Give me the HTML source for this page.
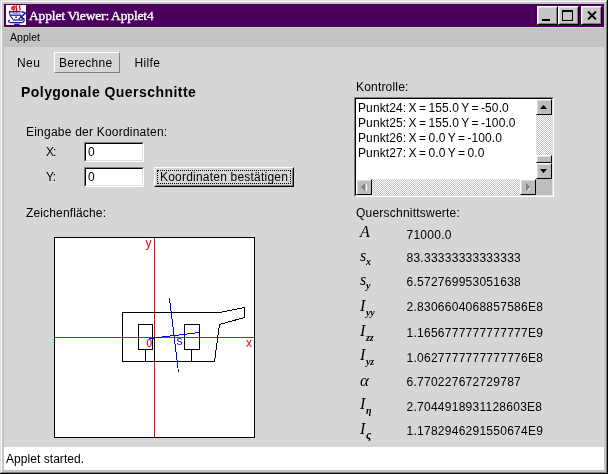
<!DOCTYPE html>
<html lang="de">
<head>
<meta charset="utf-8">
<title>Applet Viewer: Applet4</title>
<style>
html,body{margin:0;padding:0;}
body{width:608px;height:474px;overflow:hidden;background:#c4c4c4;position:relative;will-change:transform;
 font-family:"Liberation Sans",sans-serif;font-size:12px;color:#000;}
.abs{position:absolute;}
.t{position:absolute;white-space:nowrap;line-height:14px;height:14px;}
#frame{left:0;top:0;width:608px;height:474px;background:#c6c6c6;}
#titlebar{left:4px;top:4px;width:600px;height:23px;background:#4a005c;}
#title{left:29px;top:8px;font-family:"Liberation Serif",serif;font-size:13.5px;color:#fff;line-height:16px;height:16px;letter-spacing:-0.15px;word-spacing:-0.4px;-webkit-text-stroke:0.35px #fff;}
#menubar{left:4px;top:27px;width:600px;height:20px;}
#content{left:4px;top:47px;width:600px;height:400px;background:#d6d6d6;}
#status{left:4px;top:447px;width:600px;height:23px;background:#fff;}
.wbtn{position:absolute;top:6px;height:19px;width:21px;background:#c6c6c6;box-sizing:border-box;
 border:1px solid;border-color:#fff #000 #000 #fff;}
.wbtn:after{content:"";position:absolute;left:0;top:0;right:0;bottom:0;border:1px solid;border-color:#dfdfdf #808080 #808080 #dfdfdf;}
.field{position:absolute;box-sizing:border-box;background:#fff;border:1px solid;border-color:#808080 #fff #fff #808080;}
.field:after{content:"";position:absolute;left:0;top:0;right:0;bottom:0;border:1px solid;border-color:#000 #dfdfdf #dfdfdf #000;}
.sym{position:absolute;white-space:nowrap;font-family:"Liberation Serif",serif;font-style:italic;font-size:16px;line-height:18px;height:18px;}
.sym sub{font-size:10px;font-weight:bold;vertical-align:baseline;position:relative;top:5px;left:0.6px;line-height:0;}
.sym sub.s{top:3.5px;left:-0.3px;}
.v{left:406.5px;letter-spacing:0.26px;}
.sbtn{position:absolute;width:16px;height:16px;box-sizing:border-box;background:#bcbcbc;border:1px solid;border-color:#fff #000 #000 #fff;}
.sbtn:before{content:"";position:absolute;left:0;top:0;right:0;bottom:0;border:1px solid;border-color:#dcdcdc transparent transparent #dcdcdc;}
.track{position:absolute;background:#dedede;}
</style>
</head>
<body>
<div id="frame" class="abs"></div>
<svg class="abs" style="left:0;top:0" width="608" height="474" shape-rendering="crispEdges">
 <defs><pattern id="dots" width="2" height="2" patternUnits="userSpaceOnUse"><rect width="2" height="2" fill="#c1c1c1"/><rect x="0" y="1" width="1" height="1" fill="#cbcbcb"/></pattern></defs>
 <rect width="608" height="474" fill="url(#dots)"/>
</svg>
<div class="abs" style="left:0;top:0;width:607px;height:1px;background:#dfdfdf"></div>
<div class="abs" style="left:0;top:0;width:1px;height:473px;background:#dfdfdf"></div>
<div class="abs" style="left:1px;top:1px;width:605px;height:1px;background:#fff"></div>
<div class="abs" style="left:1px;top:1px;width:1px;height:471px;background:#fff"></div>
<div class="abs" style="left:0;top:473px;width:608px;height:1px;background:#000"></div>
<div class="abs" style="left:607px;top:0;width:1px;height:474px;background:#000"></div>
<div class="abs" style="left:1px;top:472px;width:606px;height:1px;background:#808080"></div>
<div class="abs" style="left:606px;top:1px;width:1px;height:472px;background:#808080"></div>

<div id="titlebar" class="abs"></div>
<svg class="abs" style="left:6px;top:5px" width="20" height="20" viewBox="0 0 20 20">
 <rect width="20" height="20" fill="#fff"/>
 <g fill="none" stroke="#f00" stroke-width="1.4" stroke-linecap="round">
  <path d="M7.4 1.8c-2.2 0.2 -2.4 2.4 -0.2 2.6M10.4 0.8c-1.6 1.4 1.4 2.6 0 4.2M13.8 0.8c-1.2 1.4 1.2 2.4 0 4M8.2 1v3.6"/>
  <path d="M7.6 5.4v3.2M10.4 5v3.8" stroke-width="0.9" stroke-linecap="butt"/>
 </g>
 <rect x="6" y="7.8" width="8.6" height="1.2" fill="#a4aad8"/>
 <rect x="9.4" y="11.4" width="1.5" height="1.5" fill="#1a1aa0"/>
 <g fill="none" stroke="#1a1aa0" stroke-width="1.3">
  <path d="M3 6.6H14.6" stroke-width="1.5"/>
  <path d="M3.3 7c0.3 2.8 1.4 5.2 3.6 7.2"/>
  <path d="M5 10.2H15"/>
  <path d="M15.2 10.4c-0.4 1.6 -1.2 2.8 -2.4 3.8"/>
  <path d="M15.4 6.6l4.2 1.5l-4.6 3.8l3.4 2.6" stroke-width="1.6"/>
  <path d="M6.8 15H17"/>
  <path d="M4 15c-2.4 1 -1.6 2.4 0.8 2.7H15.4c2 -0.4 3.4 -1.6 2.6 -2.8"/>
  <path d="M8 19.4H13.6" stroke-width="1.5"/>
 </g>
</svg>
<div id="title" class="t">Applet Viewer: Applet4</div>
<div class="wbtn" style="left:537px"><div class="abs" style="left:4px;top:12px;width:8px;height:2px;background:#000"></div></div>
<div class="wbtn" style="left:558px"><div class="abs" style="left:3px;top:3px;width:11px;height:11px;box-sizing:border-box;border:1px solid #000;border-top-width:2px"></div></div>
<div class="wbtn" style="left:581px">
 <svg class="abs" style="left:5px;top:4px" width="10" height="9" viewBox="0 0 10 9"><path d="M1 0.5L9 8.5M9 0.5L1 8.5" stroke="#000" stroke-width="1.8"/></svg>
</div>

<div id="menubar" class="abs"></div>
<div class="abs" style="left:4px;top:27px;width:600px;height:1px;background:#d2d4cc"></div>
<div class="t" style="left:10px;top:30px;font-size:10.5px;letter-spacing:0.05px">Applet</div>

<div id="content" class="abs"></div>
<div class="t" style="left:17px;top:56px;letter-spacing:0.4px">Neu</div>
<div class="abs" style="left:54px;top:52px;width:66px;height:21px;box-sizing:border-box;border:1px solid;border-color:#fff #808080 #808080 #fff;background:#d6d6d6"></div>
<div class="t" style="left:59px;top:56px;letter-spacing:0.25px">Berechne</div>
<div class="t" style="left:134.5px;top:56px;letter-spacing:0.35px">Hilfe</div>
<div class="t" style="left:21px;top:84px;font-weight:bold;font-size:14px;line-height:16px;height:16px;letter-spacing:0.45px">Polygonale Querschnitte</div>

<div class="t" style="left:26px;top:125px;letter-spacing:0.22px">Eingabe der Koordinaten:</div>
<div class="t" style="left:46px;top:145px;letter-spacing:-1px">X:</div>
<div class="field" style="left:84px;top:142px;width:60px;height:20px"></div>
<div class="t" style="left:88px;top:145px">0</div>
<div class="t" style="left:46px;top:170px;letter-spacing:-0.5px">Y:</div>
<div class="field" style="left:84px;top:167px;width:60px;height:20px"></div>
<div class="t" style="left:88px;top:170px">0</div>
<div class="abs" style="left:154px;top:167px;width:140px;height:20px;box-sizing:border-box;background:#d6d6d6;border:1px solid;border-color:#fff #000 #000 #fff"></div>
<div class="abs" style="left:155px;top:168px;width:138px;height:18px;box-sizing:border-box;border:1px solid;border-color:#d6d6d6 #808080 #808080 #d6d6d6"></div>
<div class="abs" style="left:157px;top:170px;width:134px;height:14px;box-sizing:border-box;border:1px dotted #000"></div>
<div class="t" style="left:160px;top:170px;letter-spacing:0.21px">Koordinaten bestätigen</div>

<div class="t" style="left:26px;top:206px;letter-spacing:0.15px">Zeichenfläche:</div>
<svg class="abs" style="left:54px;top:237px" width="201" height="201" viewBox="54 237 201 201" shape-rendering="crispEdges">
 <rect x="54.5" y="237.5" width="200" height="200" fill="#fff" stroke="#000"/>
 <g fill="none" stroke-width="1">
  <path stroke="#f00" d="M154.5 238V437M55 337.5H254"/>
  <path stroke="#000" d="M154.5 337.5V361.5H122.5V312.5H219.5L244.5 307.5V317.5L219.5 324.5L214.5 361.5H154.5"/>
  <path stroke="#000" d="M145.5 361.5V349.5H138.5V324.5H152.5V349.5H145.5M191.5 361.5V349.5H184.5V324.5H199.5V349.5H191.5"/>
  <path stroke="#00f" d="M149.5 338.5L199.5 332.5M169.5 298.5L178.5 372.5"/>
 </g>
 <g font-family="Liberation Sans, sans-serif" font-size="12" stroke-width="0">
  <text x="145.6" y="247" fill="#f00" stroke="#f00">y</text>
  <text x="246" y="347" fill="#f00" stroke="#f00">x</text>
  <text x="146.6" y="347" fill="#f00" stroke="#f00" stroke-width="0.2" font-size="10">0</text>
  <text x="176.6" y="345" fill="#00f" stroke="#00f">s</text>
 </g>
</svg>

<div class="t" style="left:356px;top:80px;letter-spacing:0.18px">Kontrolle:</div>
<div class="field" style="left:354px;top:97px;width:200px;height:100px"></div>
<div class="t" style="left:358px;top:101px;letter-spacing:0.1px;word-spacing:-1.05px">Punkt24: X = 155.0 Y = -50.0</div>
<div class="t" style="left:358px;top:116px;letter-spacing:0.1px;word-spacing:-1.05px">Punkt25: X = 155.0 Y = -100.0</div>
<div class="t" style="left:358px;top:131px;letter-spacing:0.1px;word-spacing:-1.05px">Punkt26: X = 0.0 Y = -100.0</div>
<div class="t" style="left:358px;top:146px;letter-spacing:0.1px;word-spacing:-1.05px">Punkt27: X = 0.0 Y = 0.0</div>
<!-- vertical scrollbar -->
<svg class="abs" style="left:356px;top:99px" width="196" height="96" shape-rendering="crispEdges">
 <defs><pattern id="dith" width="2" height="2" patternUnits="userSpaceOnUse"><rect width="2" height="2" fill="#fff"/><rect width="1" height="1" fill="#c0c0c0"/><rect x="1" y="1" width="1" height="1" fill="#c0c0c0"/></pattern></defs>
 <rect x="180" y="0" width="16" height="80" fill="url(#dith)"/>
 <rect x="0" y="80" width="180" height="16" fill="url(#dith)"/>
</svg>
<div class="sbtn" style="left:536px;top:99px"><svg class="abs" style="left:3px;top:5px" width="7" height="4"><path d="M0 4L3.5 0L7 4z" fill="#000"/></svg></div>
<div class="sbtn" style="left:536px;top:155px;height:8px"></div>
<div class="sbtn" style="left:536px;top:163px"><svg class="abs" style="left:3px;top:5px" width="7" height="4"><path d="M0 0L3.5 4L7 0z" fill="#000"/></svg></div>
<!-- horizontal scrollbar -->
<div class="sbtn" style="left:356px;top:179px"><svg class="abs" style="left:4px;top:3px" width="6" height="9"><path d="M4 0L0 4L4 8z" fill="#808080"/><path d="M5.5 1V8" stroke="#fff"/></svg></div>
<div class="sbtn" style="left:520px;top:179px"><svg class="abs" style="left:5px;top:3px" width="6" height="9"><path d="M0 0L4 4L0 8z" fill="#808080"/><path d="M1 8.5L4.5 5" stroke="#fff"/></svg></div>
<div class="abs" style="left:536px;top:179px;width:16px;height:16px;background:#bdbdbd"></div>

<div class="t" style="left:356px;top:206px;letter-spacing:0.22px">Querschnittswerte:</div>
<div class="sym" style="left:360px;top:223px">A</div>
<div class="sym" style="left:360px;top:247px">s<sub class="s">x</sub></div>
<div class="sym" style="left:360px;top:271px">s<sub class="s">y</sub></div>
<div class="sym" style="left:360px;top:297px">I<sub>yy</sub></div>
<div class="sym" style="left:360px;top:322px">I<sub>zz</sub></div>
<div class="sym" style="left:360px;top:346px">I<sub>yz</sub></div>
<div class="sym" style="left:360px;top:372px;font-size:17px">α</div>
<div class="sym" style="left:360px;top:395px">I<sub>η</sub></div>
<div class="sym" style="left:360px;top:420px">I<sub style="font-size:12px">ς</sub></div>
<div class="t v" style="top:228px">71000.0</div>
<div class="t v" style="top:251px">83.33333333333333</div>
<div class="t v" style="top:275px">6.572769953051638</div>
<div class="t v" style="top:300px">2.8306604068857586E8</div>
<div class="t v" style="top:326px">1.1656777777777777E9</div>
<div class="t v" style="top:351px">1.0627777777777776E8</div>
<div class="t v" style="top:375px">6.770227672729787</div>
<div class="t v" style="top:400px">2.7044918931128603E8</div>
<div class="t v" style="top:424px">1.1782946291550674E9</div>

<div id="status" class="abs"></div>
<div class="t" style="left:6px;top:452px;letter-spacing:0.05px">Applet started.</div>
</body>
</html>
